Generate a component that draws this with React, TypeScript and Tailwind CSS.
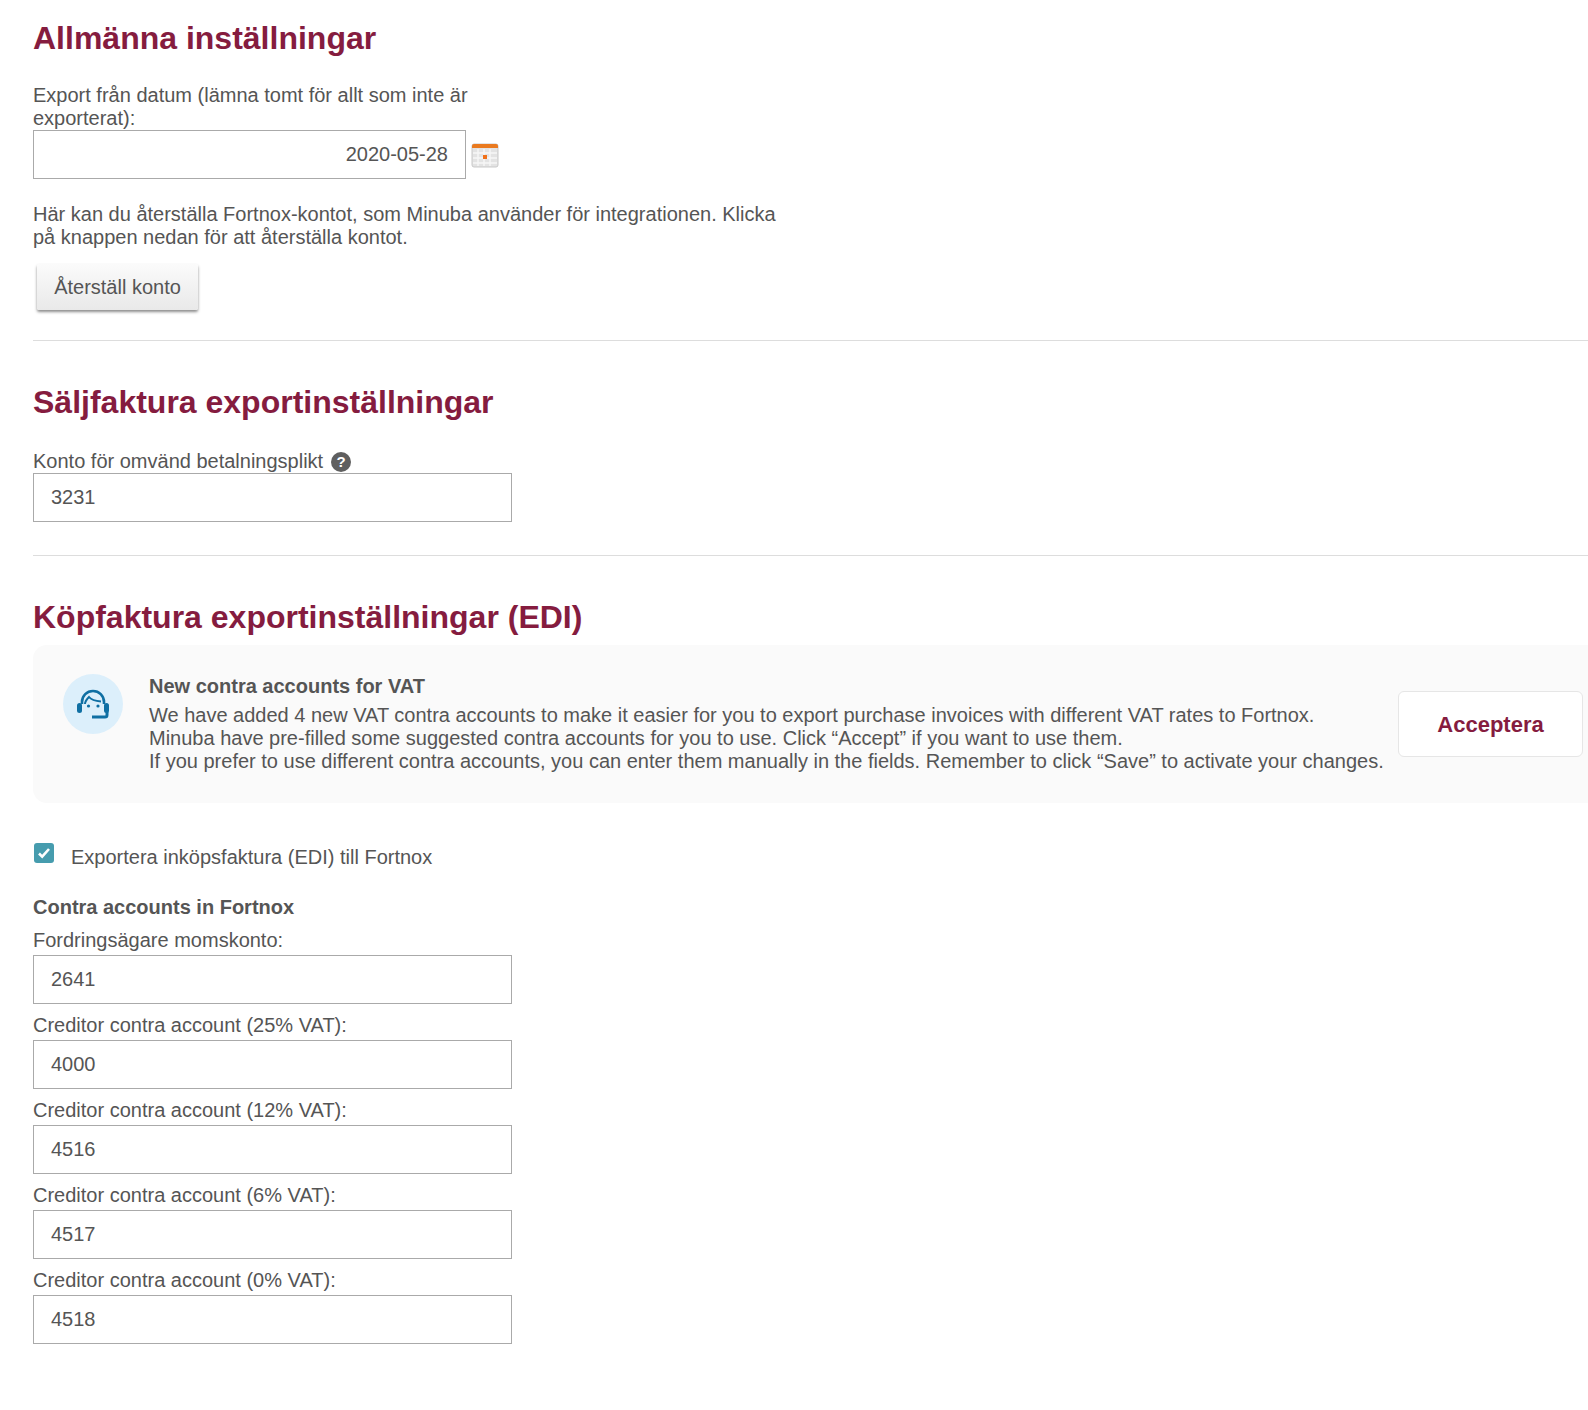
import React from 'react';

const Heading = ({ children }: { children: React.ReactNode }) => (
  <h2 className="text-[32px] leading-[36px] font-bold text-[#851c3f]">{children}</h2>
);

const Field = ({ label, value }: { label: string; value: string }) => (
  <div className="mt-[10px]">
    <label className="block text-[20px] leading-[23px] mb-[3px]">{label}</label>
    <input
      readOnly
      value={value}
      className="block w-[479px] h-[49px] border border-[#aaaaaa] bg-white px-[17px] text-[20px] text-[#555555] outline-none"
    />
  </div>
);

const CalendarIcon = () => (
  <svg width="28" height="26" viewBox="0 0 28 26" className="ml-[5px] mt-[1px]">
    <rect x="1" y="2" width="26" height="23" rx="2" fill="#e3e3e3" stroke="#c9c9c9" />
    <path d="M1 6V4a2 2 0 0 1 2-2h22a2 2 0 0 1 2 2v2z" fill="#ea7a1f" />
    <path d="M7 7v17M13 7v17M19 7v17M2 11h24M2 16h24M2 21h24" stroke="#f7f7f7" strokeWidth="1.4" />
    <rect x="12" y="13" width="4" height="4" fill="#f0711a" />
  </svg>
);

const SupportIcon = () => (
  <svg width="34" height="30" viewBox="0 0 34 30" fill="none">
    <path d="M6 15V13C6 6.5 11 2 17 2s11 4.500 11 11v2" stroke="#0f6fa3" strokeWidth="2.600" />
    <path d="M9 15c0-3 2-5 4-7 2 2.500 7 4 12 4.500" stroke="#0f6fa3" strokeWidth="2" />
    <path d="M9 14c.4 6 4 10 8 10" stroke="#0f6fa3" strokeWidth="0" />
    <rect x="1" y="14" width="5" height="10" rx="2.500" fill="#0f6fa3" />
    <rect x="28" y="14" width="5" height="10" rx="2.500" fill="#0f6fa3" />
    <circle cx="12.500" cy="17" r="1.600" fill="#0f6fa3" />
    <circle cx="22" cy="17" r="1.600" fill="#0f6fa3" />
    <path d="M16 28h13a2 2 0 0 0 2-2v-3" stroke="#0f6fa3" strokeWidth="3" />
  </svg>
);

export default function App() {
  return (
    <div className="pl-[33px] pt-[20px] pb-[20px] bg-white text-[#555555] overflow-hidden font-['Liberation_Sans',Arial,sans-serif]">
      <Heading>Allmänna inställningar</Heading>

      <div className="mt-[28px] w-[440px] text-[20px] leading-[23px]">
        Export från datum (lämna tomt för allt som inte är exporterat):
      </div>
      <div className="flex items-center">
        <input
          readOnly
          value="2020-05-28"
          className="block w-[433px] h-[49px] border border-[#aaaaaa] bg-white px-[17px] text-right text-[20px] text-[#555555] outline-none"
        />
        <CalendarIcon />
      </div>

      <p className="mt-[24px] w-[745px] text-[20px] leading-[23px]">
        Här kan du återställa Fortnox-kontot, som Minuba använder för integrationen. Klicka på knappen nedan för att återställa kontot.
      </p>
      <button className="block mt-[15px] ml-[4px] w-[161px] h-[46px] rounded-[2px] bg-gradient-to-b from-[#fbfbfb] to-[#e9e9e9] shadow-[0_2px_3px_rgba(0,0,0,0.45)] text-[20px] text-[#555555]">
        Återställ konto
      </button>

      <hr className="mt-[30px] border-0 border-t border-[#dddddd]" />

      <div className="mt-[43px]">
        <Heading>Säljfaktura exportinställningar</Heading>
      </div>
      <div className="mt-[30px] flex items-center h-[23px] text-[20px] leading-[23px]">
        Konto för omvänd betalningsplikt
        <span className="ml-[8px] flex items-center justify-center w-[20px] h-[20px] rounded-full bg-[#5f5f5f] text-white text-[15px] font-bold">?</span>
      </div>
      <input
        readOnly
        value="3231"
        className="block w-[479px] h-[49px] border border-[#aaaaaa] bg-white px-[17px] text-[20px] text-[#555555] outline-none"
      />

      <hr className="mt-[33px] border-0 border-t border-[#dddddd]" />

      <div className="mt-[43px]">
        <Heading>Köpfaktura exportinställningar (EDI)</Heading>
      </div>

      <div className="mt-[10px] flex h-[158px] rounded-l-[14px] bg-[#fafafa]">
        <div className="ml-[30px] mt-[29px] flex items-center justify-center w-[60px] h-[60px] rounded-full bg-[#dceffb] shrink-0">
          <SupportIcon />
        </div>
        <div className="ml-[26px] mt-[30px] flex-1 text-[20px] leading-[23px]">
          <div className="font-bold">New contra accounts for VAT</div>
          <div className="mt-[6px]">We have added 4 new VAT contra accounts to make it easier for you to export purchase invoices with different VAT rates to Fortnox.</div>
          <div>Minuba have pre-filled some suggested contra accounts for you to use. Click “Accept” if you want to use them.</div>
          <div>If you prefer to use different contra accounts, you can enter them manually in the fields. Remember to click “Save” to activate your changes.</div>
        </div>
        <button className="mt-[46px] mr-[5px] w-[185px] h-[66px] shrink-0 rounded-[6px] border border-[#e6e6e6] bg-white text-[22px] font-bold text-[#851c3f]">
          Acceptera
        </button>
      </div>

      <div className="mt-[40px] flex items-start text-[20px] leading-[23px]">
        <span className="mt-0 ml-[1px] flex items-center justify-center w-[20px] h-[20px] rounded-[3px] bg-[#469cae] shrink-0">
          <svg width="14" height="14" viewBox="0 0 14 14" fill="none">
            <path d="M2 7.500l3.200 3.200L12 3" stroke="#ffffff" strokeWidth="2.600" />
          </svg>
        </span>
        <span className="ml-[17px] mt-[3px]">Exportera inköpsfaktura (EDI) till Fortnox</span>
      </div>

      <div className="mt-[27px] text-[20px] leading-[23px] font-bold">Contra accounts in Fortnox</div>

      <Field label="Fordringsägare momskonto:" value="2641" />
      <Field label="Creditor contra account (25% VAT):" value="4000" />
      <Field label="Creditor contra account (12% VAT):" value="4516" />
      <Field label="Creditor contra account (6% VAT):" value="4517" />
      <Field label="Creditor contra account (0% VAT):" value="4518" />
    </div>
  );
}
